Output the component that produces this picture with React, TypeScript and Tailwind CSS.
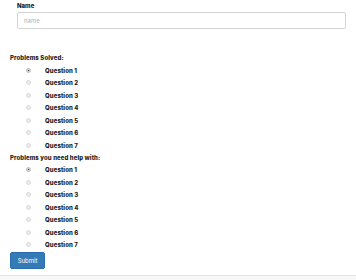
const questions = ["Question 1", "Question 2", "Question 3", "Question 4", "Question 5", "Question 6", "Question 7"];

function RadioGroup({ title, name }: { title: string; name: string }) {
  return (
    <div>
      <div className="text-[6px] font-extrabold leading-[12px] tracking-[0.1px] text-[#1a1a1a]">{title}</div>
      {questions.map((q, i) => (
        <label key={q} className="flex h-[12.5px] items-center">
          <span className="flex w-[35px] justify-center pl-[1px]">
            <input
              type="radio"
              name={name}
              defaultChecked={i === 0}
              className="m-0 h-[5px] w-[5px] appearance-none rounded-full border border-[#d9d9d9] bg-[#ececec] checked:border-[#bbb] checked:bg-[radial-gradient(circle,#444_0,#444_35%,#e8e8e8_50%)]"
            />
          </span>
          <span className="text-[6px] font-extrabold tracking-[0.1px] text-[#1a1a1a]">{q}</span>
        </label>
      ))}
    </div>
  );
}

export default function App() {
  return (
    <div className="h-[280px] w-[356px] overflow-hidden bg-white font-['Inter',sans-serif]">
      <div className="px-[17px] pt-[1px]">
        <div className="text-[6px] font-extrabold leading-[9px] text-[#1a1a1a]">Name</div>
        <input
          type="text"
          placeholder="name"
          className="mt-[2px] block h-[17px] w-[329px] rounded-[2px] border border-[#d4d4d4] px-[6px] text-[6px] placeholder:text-[#b0b0b0] focus:outline-none"
        />
      </div>
      <div className="px-[10px] pt-[23px]">
        <RadioGroup title="Problems Solved:" name="solved" />
        <RadioGroup title="Problems you need help with:" name="help" />
        <button
          type="button"
          className="mt-[1px] block h-[17px] w-[35px] rounded-[2px] border border-[#2a6db0] bg-[#337ab7] p-0 text-[6px] leading-[15px] text-white"
        >
          Submit
        </button>
      </div>
      <div className="mt-[6px] h-[10px] border-t border-[#e5e5e5] bg-[#f8f8f8]" />
    </div>
  );
}
